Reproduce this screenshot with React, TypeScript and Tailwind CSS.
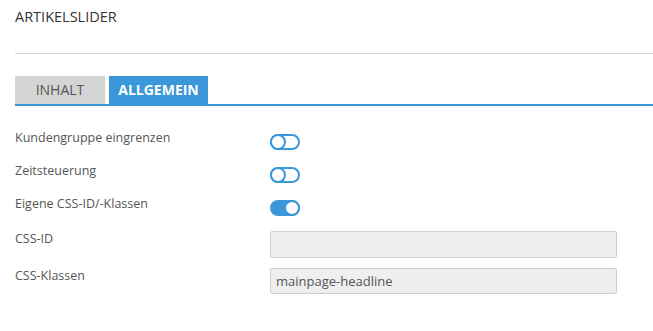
import { useState } from "react";

type ToggleProps = {
  on: boolean;
  onChange: () => void;
};

function Toggle({ on, onChange }: ToggleProps) {
  return (
    <button
      type="button"
      onClick={onChange}
      className={`relative block h-[16px] w-[30px] rounded-full border-2 border-[#3a97d9] p-0 ${
        on ? "bg-[#3a97d9]" : "bg-white"
      }`}
      aria-pressed={on}
    >
      <span
        className={`absolute top-[-2px] block h-[16px] w-[16px] rounded-full border-2 border-[#3a97d9] bg-white ${
          on ? "right-[-2px]" : "left-[-2px]"
        }`}
      />
    </button>
  );
}

export default function App() {
  const [tab, setTab] = useState("allgemein");
  const [kundengruppe, setKundengruppe] = useState(false);
  const [zeit, setZeit] = useState(false);
  const [eigene, setEigene] = useState(true);

  const tabClass = (active: boolean) =>
    active
      ? "bg-[#3a97d9] font-bold text-white"
      : "bg-[#d4d4d4] text-[#555]";

  return (
    <div className="min-h-[331px] bg-white pl-[15px] font-['Open_Sans',sans-serif] text-[12.5px] text-[#555]">
      <h1 className="pt-[7px] text-[14.5px] leading-[20px] text-[#333]">ARTIKELSLIDER</h1>
      <div className="mt-[26px] h-px bg-[#d5d5d5]" />

      <div className="mt-[22px] flex gap-[4px] border-b-2 border-[#3a97d9]">
        <button
          type="button"
          onClick={() => setTab("inhalt")}
          className={`h-[28px] w-[90px] text-[14px] leading-[28px] ${tabClass(tab === "inhalt")}`}
        >
          INHALT
        </button>
        <button
          type="button"
          onClick={() => setTab("allgemein")}
          className={`h-[28px] w-[99px] text-[14px] leading-[28px] ${tabClass(tab === "allgemein")}`}
        >
          ALLGEMEIN
        </button>
      </div>

      <div className="mt-[22px]">
        <div className="flex h-[33px] items-start">
          <span className="mt-[1px] w-[255px] leading-[18px]">Kundengruppe eingrenzen</span>
          <div className="mt-[6px]">
            <Toggle on={kundengruppe} onChange={() => setKundengruppe((v) => !v)} />
          </div>
        </div>
        <div className="flex h-[33px] items-start">
          <span className="mt-[1px] w-[255px] leading-[18px]">Zeitsteuerung</span>
          <div className="mt-[6px]">
            <Toggle on={zeit} onChange={() => setZeit((v) => !v)} />
          </div>
        </div>
        <div className="flex h-[37px] items-start">
          <span className="mt-[1px] w-[255px] leading-[18px]">Eigene CSS-ID/-Klassen</span>
          <div className="mt-[6px]">
            <Toggle on={eigene} onChange={() => setEigene((v) => !v)} />
          </div>
        </div>

        <div className="flex h-[37px] items-start">
          <span className="mt-[-1px] w-[255px] leading-[18px]">CSS-ID</span>
          <input
            type="text"
            defaultValue=""
            className="h-[27px] w-[347px] rounded-[2px] border border-[#cfcfcf] bg-[#efefef] px-[5px] text-[13px] text-[#555] outline-none"
          />
        </div>
        <div className="flex items-start">
          <span className="mt-[-1px] w-[255px] leading-[18px]">CSS-Klassen</span>
          <input
            type="text"
            defaultValue="mainpage-headline"
            className="h-[26px] w-[347px] rounded-[2px] border border-[#cfcfcf] bg-[#efefef] px-[5px] text-[13px] text-[#555] outline-none"
          />
        </div>
      </div>
    </div>
  );
}
